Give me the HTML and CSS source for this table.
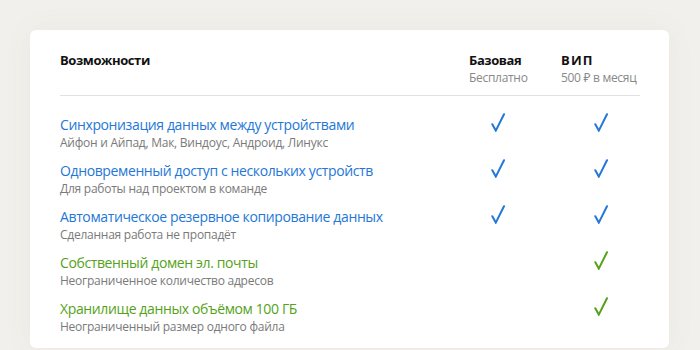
FILE: index.html
```html
<!DOCTYPE html>
<html lang="ru">
<head>
<meta charset="utf-8">
<link rel="stylesheet" href="styles.css">
</head>
<body>
<div class="page">
  <div class="card">
    <div class="table">
      <div class="hcell feat-h">Возможности</div>
      <div class="hcell plan">
        <div class="plan-name">Базовая</div>
        <div class="plan-price">Бесплатно</div>
      </div>
      <div class="hcell plan">
        <div class="plan-name vip">ВИП</div>
        <div class="plan-price">500 ₽ в месяц</div>
      </div>
      <div class="divider"></div>

      <div class="feat blue">
        <div class="ft">Синхронизация данных между устройствами</div>
        <div class="fs">Айфон и Айпад, Мак, Виндоус, Андроид, Линукс</div>
      </div>
      <div class="chk blue"><svg viewBox="0 0 14 19" width="14" height="19"><path d="M1.3 11.2 L4.8 17.6 L13 1.2"/></svg></div>
      <div class="chk blue"><svg viewBox="0 0 14 19" width="14" height="19"><path d="M1.3 11.2 L4.8 17.6 L13 1.2"/></svg></div>

      <div class="feat blue">
        <div class="ft">Одновременный доступ с нескольких устройств</div>
        <div class="fs">Для работы над проектом в команде</div>
      </div>
      <div class="chk blue"><svg viewBox="0 0 14 19" width="14" height="19"><path d="M1.3 11.2 L4.8 17.6 L13 1.2"/></svg></div>
      <div class="chk blue"><svg viewBox="0 0 14 19" width="14" height="19"><path d="M1.3 11.2 L4.8 17.6 L13 1.2"/></svg></div>

      <div class="feat blue">
        <div class="ft">Автоматическое резервное копирование данных</div>
        <div class="fs">Сделанная работа не пропадёт</div>
      </div>
      <div class="chk blue"><svg viewBox="0 0 14 19" width="14" height="19"><path d="M1.3 11.2 L4.8 17.6 L13 1.2"/></svg></div>
      <div class="chk blue"><svg viewBox="0 0 14 19" width="14" height="19"><path d="M1.3 11.2 L4.8 17.6 L13 1.2"/></svg></div>

      <div class="feat green">
        <div class="ft">Собственный домен эл. почты</div>
        <div class="fs">Неограниченное количество адресов</div>
      </div>
      <div class="chk"></div>
      <div class="chk green"><svg viewBox="0 0 14 19" width="14" height="19"><path d="M1.3 11.2 L4.8 17.6 L13 1.2"/></svg></div>

      <div class="feat green">
        <div class="ft">Хранилище данных объёмом 100 ГБ</div>
        <div class="fs">Неограниченный размер одного файла</div>
      </div>
      <div class="chk"></div>
      <div class="chk green"><svg viewBox="0 0 14 19" width="14" height="19"><path d="M1.3 11.2 L4.8 17.6 L13 1.2"/></svg></div>
    </div>
  </div>
</div>
</body>
</html>
```
FILE: styles.css
```css
* { box-sizing: border-box; }
html, body { margin: 0; padding: 0; }
body {
  width: 700px;
  height: 350px;
  overflow: hidden;
  background: #f2f0ec;
  font-family: "Open Sans", "Noto Sans", sans-serif;
}
.page {
  padding: 30px 31px 0 30px;
}
.card {
  background: #fff;
  border-radius: 6px;
  height: 318px;
  padding: 21px 29px 0 30px;
  box-shadow: 0 0 30px rgba(120, 100, 70, 0.06);
}
.table {
  display: grid;
  grid-template-columns: 1fr 58px 79px;
  column-gap: 34px;
  row-gap: 10px;
}
.hcell { color: #111; }
.feat-h {
  font-size: 13px;
  font-weight: 700;
  line-height: 18px;
  letter-spacing: -0.4px;
}
.plan-name {
  font-size: 13px;
  font-weight: 700;
  line-height: 18px;
  white-space: nowrap;
  letter-spacing: -0.4px;
}
.plan-name.vip { letter-spacing: 1.2px; }
.plan-price {
  font-size: 12px;
  line-height: 18px;
  color: #888;
  white-space: nowrap;
  letter-spacing: -0.3px;
}
.divider {
  grid-column: 1 / -1;
  border-top: 1px solid #e1e1e1;
  margin-top: -2px;
  margin-bottom: 10px;
}
.feat .ft {
  font-size: 14px;
  line-height: 18px;
  white-space: nowrap;
  letter-spacing: -0.38px;
}
.feat .fs {
  font-size: 12px;
  line-height: 18px;
  color: #7a7a7a;
  white-space: nowrap;
  letter-spacing: -0.25px;
}
.blue { color: #2477d6; }
.green { color: #55a21a; }
.chk {
  display: flex;
  justify-content: center;
  align-items: flex-start;
  margin-top: -3px;
}
.chk svg path {
  fill: none;
  stroke: currentColor;
  stroke-width: 2;
  stroke-linecap: round;
  stroke-linejoin: miter;
}
```
